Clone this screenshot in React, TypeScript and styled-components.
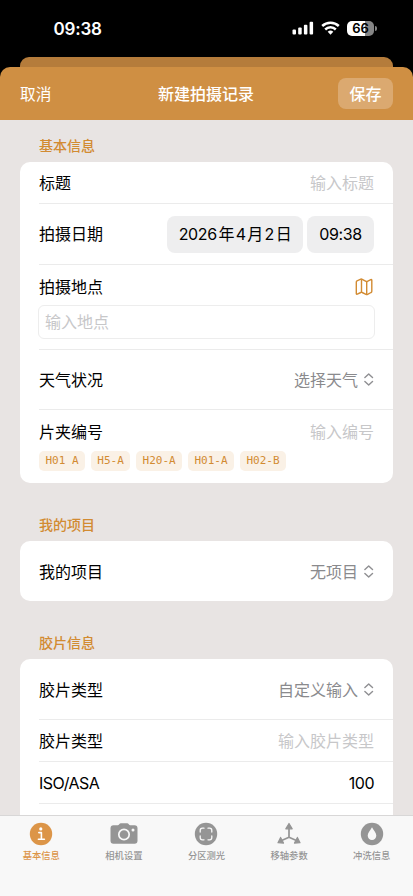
import React from "react";
import styled, { createGlobalStyle } from "styled-components";

const GlobalStyle = createGlobalStyle`
  *, *::before, *::after { box-sizing: border-box; }
  html, body { margin: 0; background: #000; }
  body { overflow: hidden; font-family: Inter, "Noto Sans CJK SC", sans-serif; }
  button, input { font-family: inherit; }
`;

const accent = "#d28b32";

const Screen = styled.div`
  width: 413px;
  height: 896px;
  display: flex;
  flex-direction: column;
  overflow: hidden;
  background: #000;
  color: #000;
  font-size: 16px;
`;

const StatusBar = styled.div`
  height: 57px;
  flex: none;
  display: flex;
  justify-content: space-between;
  align-items: center;
  padding: 0 36px 0 53.5px;
  color: #fff;
`;

const Clock = styled.span`
  font-size: 17px;
  font-weight: 600;
  line-height: 20px;
  letter-spacing: -0.2px;
`;

const Indicators = styled.div`
  display: flex;
  align-items: center;
  gap: 7px;
  padding-bottom: 1px;
`;

const Battery = styled.div`
  display: flex;
  align-items: center;
  gap: 1px;
`;

const BatteryBody = styled.div<{ $level: number }>`
  width: 27px;
  height: 15px;
  border-radius: 5px;
  background: linear-gradient(90deg, #fff ${(p) => p.$level}%, #858585 ${(p) => p.$level}%);
  color: #000;
  font-size: 13px;
  font-weight: 600;
  line-height: 15px;
  text-align: center;
`;

const BatteryTip = styled.div`
  width: 2px;
  height: 5px;
  border-radius: 0 2px 2px 0;
  background: #858585;
`;

const BackSheet = styled.div`
  flex: none;
  height: 20px;
  margin: 0 20px -10px;
  border-radius: 9px 9px 0 0;
  background: #b57c3b;
`;

const Header = styled.header`
  flex: none;
  height: 53px;
  display: grid;
  grid-template-columns: 1fr auto 1fr;
  align-items: center;
  padding: 0 20px;
  border-radius: 10px 10px 0 0;
  background: #cf8f43;
  color: #fff;
`;

const CancelButton = styled.button`
  justify-self: start;
  border: 0;
  padding: 0;
  background: none;
  color: #fff;
  font-size: 15.7px;
`;

const Title = styled.h1`
  margin: 0;
  padding-right: 1px;
  font-size: 16px;
  font-weight: 500;
  line-height: 24px;
`;

const SaveButton = styled.button`
  justify-self: end;
  width: 55px;
  height: 31px;
  border: 0;
  border-radius: 8px;
  padding: 0 0 2px;
  background: #dba970;
  color: #fff;
  font-size: 16px;
  font-weight: 500;
`;

const Form = styled.main`
  flex: 1;
  min-height: 0;
  overflow: hidden;
  padding: 0 20px;
  background: #e8e4e3;
`;

const SectionTitle = styled.h2<{ $first?: boolean }>`
  height: ${(p) => (p.$first ? 42 : 58)}px;
  margin: 0;
  padding: ${(p) => (p.$first ? 16 : 32)}px 19px 0;
  color: ${accent};
  font-size: 14px;
  font-weight: 500;
  line-height: 20px;
`;

const Card = styled.section`
  padding-left: 19px;
  border-radius: 10px;
  background: #fff;
`;

const Row = styled.div<{ $height: number }>`
  height: ${(p) => p.$height}px;
  display: flex;
  align-items: center;
  justify-content: space-between;
  padding-right: 19px;
  padding-top: 1px;
  div + & {
    padding-top: 0;
    border-top: 1px solid #ebebeb;
  }
`;

const StackRow = styled.div<{ $height: number }>`
  height: ${(p) => p.$height}px;
  padding: 10px 19px 0 0;
  border-top: 1px solid #ebebeb;
`;

const Line = styled.div`
  height: 24px;
  display: flex;
  align-items: center;
  justify-content: space-between;
`;

const Label = styled.span`
  line-height: 24px;
`;

const Placeholder = styled.span`
  color: #c7c7c9;
  line-height: 24px;
`;

const Value = styled.span`
  line-height: 24px;
  letter-spacing: -0.5px;
`;

const Picker = styled.span`
  display: flex;
  align-items: center;
  gap: 6px;
  color: #8a8a8d;
  line-height: 24px;
`;

const Chips = styled.div`
  display: flex;
  gap: 4px;
`;

const DateChip = styled.div<{ $width: number }>`
  width: ${(p) => p.$width}px;
  height: 37px;
  display: flex;
  align-items: center;
  justify-content: center;
  gap: 1.7px;
  border-radius: 8px;
  background: #eeeeef;
  line-height: 36px;
  letter-spacing: -0.4px;
`;

const PlaceField = styled.div`
  height: 34px;
  margin: 6px -1px 0;
  padding-left: 6px;
  border: 1px solid #ededed;
  border-radius: 6px;
  color: #c7c7c9;
  line-height: 32px;
`;

const Tags = styled.div`
  display: flex;
  gap: 6px;
  margin-top: 7px;
`;

const Tag = styled.span`
  height: 20px;
  padding: 0 6.4px;
  border-radius: 5px;
  background: #faf1e6;
  color: ${accent};
  font-family: "DejaVu Sans Mono", monospace;
  font-size: 11px;
  line-height: 20px;
  white-space: pre;
`;

const TabBar = styled.nav`
  flex: none;
  height: 81px;
  display: grid;
  grid-template-columns: repeat(5, 1fr);
  border-top: 1px solid #d8d7d7;
  background: #f8f8f8;
`;

const Tab = styled.div<{ $active?: boolean }>`
  display: flex;
  flex-direction: column;
  align-items: center;
  padding-top: 5px;
  color: ${(p) => (p.$active ? "#dc9548" : "#959595")};
  font-size: 9.3px;
  font-weight: 500;
  line-height: 14px;
  svg { display: block; margin-bottom: 2px; }
`;

const Signal = () => (
  <svg width="22" height="14" viewBox="0 0 22 14" fill="#fff">
    <rect x="0.5" y="8.5" width="3.5" height="5" rx="1" />
    <rect x="6.2" y="6.5" width="3.5" height="7" rx="1" />
    <rect x="11.9" y="3.8" width="3.5" height="9.7" rx="1" />
    <rect x="17.6" y="0.7" width="3.5" height="12.8" rx="1" />
  </svg>
);

const Wifi = () => (
  <svg width="19" height="14" viewBox="0 0 19 14" fill="none" stroke="#fff" strokeWidth="2.5">
    <path d="M1.2 5a12 12 0 0 1 16.6 0" />
    <path d="M4.2 8.5a7.6 7.6 0 0 1 10.6 0" />
    <path d="M6.7 10.8a4 4 0 0 1 5.6 0L9.5 13.7z" fill="#fff" stroke="none" />
  </svg>
);

const MapIcon = () => (
  <svg width="19" height="18" viewBox="0 0 18 18" fill="none" stroke={accent} strokeWidth="1.4" strokeLinejoin="round">
    <path d="M.8 4 Q.8 3.2 1.5 2.8L5.3 1.2Q6 .9 6.7 1.3L10.5 3.4Q11.2 3.7 11.9 3.3L15.3 1.6Q16.3 1.2 16.3 2.3V13.2Q16.3 14.1 15.5 14.5L12.1 16.4Q11.3 16.8 10.5 16.4L6.7 14.5Q6 14.1 5.3 14.5L1.8 16.2Q.8 16.6 .8 15.6Z" />
    <path d="M6 1.2V14.3M11.2 3.5V16.5" />
  </svg>
);

const UpDown = () => (
  <svg width="10" height="13" viewBox="0 0 10 13" fill="none" stroke="#8f8f92" strokeWidth="1.4" strokeLinecap="round" strokeLinejoin="round">
    <path d="M.9 4.6 4.7 1l3.8 3.6M.9 8.4 4.7 12l3.8-3.6" />
  </svg>
);

const InfoIcon = () => (
  <svg width="28" height="26" viewBox="0 0 28 26">
    <circle cx="14" cy="13" r="11.2" fill="currentColor" />
    <circle cx="13.8" cy="7.9" r="1.6" fill="#fff" />
    <path d="M11.8 11.6h2.6v6.5M11.4 18.3h6" fill="none" stroke="#fff" strokeWidth="1.6" strokeLinecap="round" strokeLinejoin="round" />
  </svg>
);

const CameraIcon = () => (
  <svg width="28" height="26" viewBox="0 0 28 26">
    <path d="M3.5 4.2h4.2c1.3 0 1.7-2 3.2-2h6.2c1.5 0 1.9 2 3.2 2h4.2c2 0 3 1 3 3v12.5c0 2-1 3-3 3h-21c-2 0-3-1-3-3V7.2c0-2 1-3 3-3z" fill="currentColor" />
    <circle cx="14" cy="13.5" r="5.2" fill="none" stroke="#f8f8f8" strokeWidth="1.7" />
    <circle cx="23" cy="9" r="1.5" fill="#f8f8f8" />
  </svg>
);

const MeterIcon = () => (
  <svg width="28" height="26" viewBox="0 0 28 26">
    <circle cx="14" cy="13" r="11.2" fill="currentColor" />
    <path d="M8.2 11V9.4q0-2.2 2.2-2.2H12M16 7.2h1.6q2.2 0 2.2 2.2V11M19.8 15v1.6q0 2.2-2.2 2.2H16M12 18.8h-1.6q-2.2 0-2.2-2.2V15" fill="none" stroke="#f8f8f8" strokeWidth="1.3" strokeLinecap="round" />
  </svg>
);

const AxisIcon = () => (
  <svg width="28" height="26" viewBox="0 0 28 26">
    <path d="M14 6v10.2M14 16.2 5.5 20M14 16.2l8.5 3.8" stroke="currentColor" strokeWidth="1.7" fill="none" />
    <path d="M14 2.5 17.2 7.8h-6.4zM3 21.7 5.6 16.4l2.9 5.7zM25 21.7 22.4 16.4l-2.9 5.7z" fill="currentColor" stroke="currentColor" strokeLinejoin="round" strokeWidth="1.2" />
  </svg>
);

const DropIcon = () => (
  <svg width="28" height="26" viewBox="0 0 28 26">
    <circle cx="14" cy="13" r="11.2" fill="currentColor" />
    <path d="M14 6.2c1.6 3 4.3 5.6 4.3 8.4a4.3 4.3 0 0 1-8.6 0c0-2.8 2.7-5.4 4.3-8.4z" fill="#f8f8f8" />
  </svg>
);

const dateParts = ["2026", "年", "4", "月", "2", "日"];
const holders = ["H01 A", "H5-A", "H20-A", "H01-A", "H02-B"];

const tabs = [
  { label: "基本信息", Icon: InfoIcon, active: true },
  { label: "相机设置", Icon: CameraIcon },
  { label: "分区测光", Icon: MeterIcon },
  { label: "移轴参数", Icon: AxisIcon },
  { label: "冲洗信息", Icon: DropIcon },
];

export default function App() {
  return (
    <Screen lang="zh-CN">
      <GlobalStyle />
      <StatusBar>
        <Clock>09:38</Clock>
        <Indicators>
          <Signal />
          <Wifi />
          <Battery>
            <BatteryBody $level={66}>66</BatteryBody>
            <BatteryTip />
          </Battery>
        </Indicators>
      </StatusBar>
      <BackSheet />
      <Header>
        <CancelButton>取消</CancelButton>
        <Title>新建拍摄记录</Title>
        <SaveButton>保存</SaveButton>
      </Header>
      <Form>
        <SectionTitle $first>基本信息</SectionTitle>
        <Card>
          <Row $height={41}>
            <Label>标题</Label>
            <Placeholder>输入标题</Placeholder>
          </Row>
          <Row $height={61}>
            <Label>拍摄日期</Label>
            <Chips>
              <DateChip $width={136}>
                {dateParts.map((part) => <span key={part}>{part}</span>)}
              </DateChip>
              <DateChip $width={67}>09:38</DateChip>
            </Chips>
          </Row>
          <StackRow $height={85}>
            <Line>
              <Label>拍摄地点</Label>
              <MapIcon />
            </Line>
            <PlaceField>输入地点</PlaceField>
          </StackRow>
          <Row $height={60}>
            <Label>天气状况</Label>
            <Picker>选择天气<UpDown /></Picker>
          </Row>
          <StackRow $height={74}>
            <Line>
              <Label>片夹编号</Label>
              <Placeholder>输入编号</Placeholder>
            </Line>
            <Tags>
              {holders.map((h) => <Tag key={h}>{h}</Tag>)}
            </Tags>
          </StackRow>
        </Card>
        <SectionTitle>我的项目</SectionTitle>
        <Card>
          <Row $height={60}>
            <Label>我的项目</Label>
            <Picker>无项目<UpDown /></Picker>
          </Row>
        </Card>
        <SectionTitle>胶片信息</SectionTitle>
        <Card>
          <Row $height={60}>
            <Label>胶片类型</Label>
            <Picker>自定义输入<UpDown /></Picker>
          </Row>
          <Row $height={42}>
            <Label>胶片类型</Label>
            <Placeholder>输入胶片类型</Placeholder>
          </Row>
          <Row $height={42}>
            <Value>ISO/ASA</Value>
            <Value>100</Value>
          </Row>
          <Row $height={42} />
        </Card>
      </Form>
      <TabBar>
        {tabs.map(({ label, Icon, active }) => (
          <Tab key={label} $active={active}>
            <Icon />
            {label}
          </Tab>
        ))}
      </TabBar>
    </Screen>
  );
}
